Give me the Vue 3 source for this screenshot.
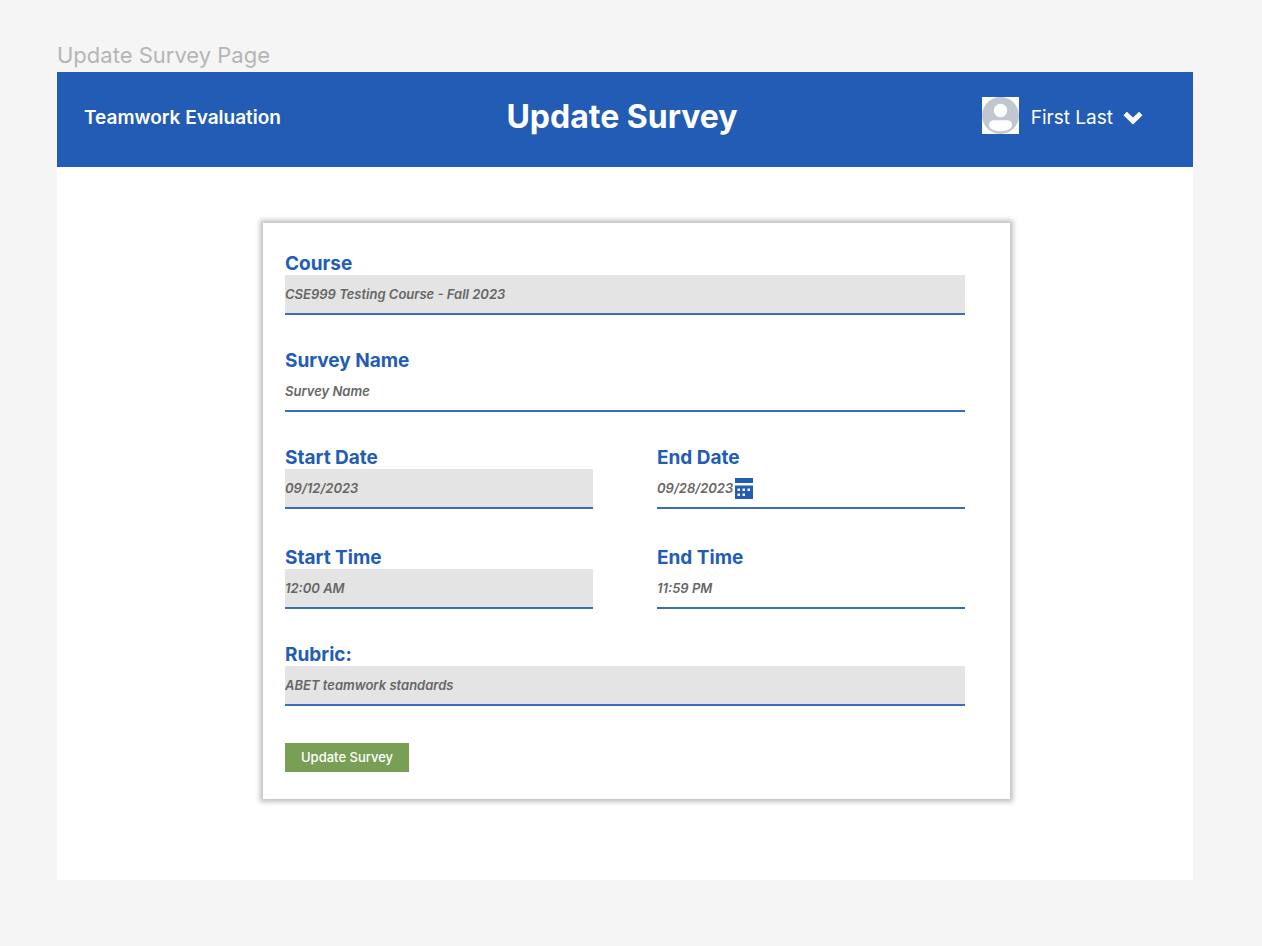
<script setup>
import { ref } from 'vue'

const course = ref('CSE999 Testing Course - Fall 2023')
const surveyName = ref('')
const startDate = ref('09/12/2023')
const endDate = ref('09/28/2023')
const startTime = ref('12:00 AM')
const endTime = ref('11:59 PM')
const rubric = ref('ABET teamwork standards')
</script>

<template>
  <div class="page">
    <p class="page-name">Update Survey Page</p>
    <div class="board">
      <header class="header">
        <span class="brand">Teamwork Evaluation</span>
        <h1 class="title">Update Survey</h1>
        <button type="button" class="profile">
          <svg class="avatar" viewBox="0 0 37 37" aria-hidden="true">
            <rect width="37" height="37" fill="#fff" />
            <circle cx="18.5" cy="18.5" r="18.5" fill="#c1c6d0" />
            <circle cx="18.5" cy="13.5" r="6.7" fill="#fff" />
            <path d="M12 23.3H25Q30 23.3 30 28.2C30 31.5 25 34.3 18.5 34.3S7 31.5 7 28.2Q7 23.3 12 23.3Z" fill="#fff" />
          </svg>
          <span class="user">First Last</span>
          <svg class="chevron" viewBox="0 0 20 14" aria-hidden="true">
            <path d="M2.2 2.5L10 10L17.8 2.5" fill="none" stroke="#fff" stroke-width="5" />
          </svg>
        </button>
      </header>

      <main class="main">
        <form class="card" @submit.prevent>
          <div class="field">
            <label for="course">Course</label>
            <div class="control locked"><input id="course" v-model="course" type="text" readonly /></div>
          </div>
          <div class="field">
            <label for="survey-name">Survey Name</label>
            <div class="control"><input id="survey-name" v-model="surveyName" type="text" placeholder="Survey Name" /></div>
          </div>
          <div class="schedule">
            <div class="field">
              <label for="start-date">Start Date</label>
              <div class="control locked"><input id="start-date" v-model="startDate" type="text" readonly /></div>
            </div>
            <div class="field">
              <label for="end-date">End Date</label>
              <div class="control">
                <input id="end-date" v-model="endDate" class="date" type="text" />
                <button type="button" class="picker" aria-label="Choose end date">
                  <svg viewBox="0 0 18 21" aria-hidden="true">
                    <path d="M0 0H18V5H0Z" fill="#225cb5" />
                    <path d="M0 7.5H18V21H0Z" fill="#225cb5" />
                    <path d="M2.5 10.5H5V13H2.5ZM7.5 10.5H10V13H7.5ZM12.5 10.5H15V13H12.5ZM2.5 15.5H5V18H2.5ZM7.5 15.5H10V18H7.5Z" fill="#fff" />
                  </svg>
                </button>
              </div>
            </div>
            <div class="field">
              <label for="start-time">Start Time</label>
              <div class="control locked"><input id="start-time" v-model="startTime" type="text" readonly /></div>
            </div>
            <div class="field">
              <label for="end-time">End Time</label>
              <div class="control"><input id="end-time" v-model="endTime" type="text" /></div>
            </div>
          </div>
          <div class="field">
            <label for="rubric">Rubric:</label>
            <div class="control locked"><input id="rubric" v-model="rubric" type="text" readonly /></div>
          </div>
          <button type="submit" class="submit">Update Survey</button>
        </form>
      </main>
    </div>
  </div>
</template>

<style>
body {
  margin: 0;
  background: #f5f5f5;
}
</style>

<style scoped>
.page {
  box-sizing: border-box;
  min-height: 100vh;
  padding: 39px 69px 66px 57px;
  display: flex;
  flex-direction: column;
  font-family: Inter, "Liberation Sans", sans-serif;
}
.page-name {
  margin: 0;
  padding-bottom: 1px;
  color: #b5b5b5;
  font-size: 22px;
  line-height: 32px;
}
.board {
  flex: 1;
  background: #fff;
}
.header {
  display: grid;
  grid-template-columns: 1fr auto 1fr;
  align-items: center;
  box-sizing: border-box;
  height: 95px;
  padding: 0 33px 6px 27px;
  background: #225cb5;
  color: #fff;
}
.brand {
  padding-top: 2px;
  font-size: 19px;
  font-weight: 600;
}
.title {
  margin: 0;
  font-size: 32px;
  font-weight: 700;
}
.profile {
  justify-self: end;
  display: flex;
  align-items: center;
  margin-right: 17px;
  padding: 0 0 2px;
  border: 0;
  background: none;
  color: inherit;
  font: inherit;
  font-size: 19px;
}
.user {
  padding-top: 4px;
}
.avatar {
  width: 37px;
  height: 37px;
  margin-right: 12px;
}
.chevron {
  width: 20px;
  height: 14px;
  margin-left: 10px;
  padding-top: 4px;
}
.main {
  padding: 56px 183px 56px 206px;
}
.card {
  display: flex;
  flex-direction: column;
  gap: 33px;
  padding: 28px 45px 27px 22px;
  background: #fff;
  box-shadow: 0 0 5px 3px rgba(0, 0, 0, 0.25);
}
.field label {
  display: block;
  padding-top: 2px;
  color: #225cb5;
  font-size: 19px;
  font-weight: 700;
  line-height: 22px;
}
.control {
  display: flex;
  align-items: center;
  box-sizing: border-box;
  height: 40px;
  border-bottom: 2px solid #3a6cb9;
}
.locked {
  background: #e4e4e4;
}
.control input {
  flex: 1;
  min-width: 0;
  padding: 0;
  border: 0;
  outline: 0;
  background: none;
  color: #666;
  font: 600 13px/20px Inter, "Liberation Sans", sans-serif;
  font-style: oblique 10deg;
}
.control input::placeholder {
  color: #666;
  opacity: 1;
}
.control .date {
  flex: 0 0 78px;
}
.picker {
  display: flex;
  padding: 0;
  border: 0;
  background: none;
}
.picker svg {
  width: 18px;
  height: 21px;
}
.schedule {
  display: grid;
  grid-template-columns: 1fr 1fr;
  gap: 36px 64px;
}
.submit {
  align-self: flex-start;
  margin-top: 4px;
  padding: 0 16px;
  border: 0;
  background: #789f55;
  color: #fff;
  font: 500 13px/29px Inter, "Liberation Sans", sans-serif;
}
</style>
